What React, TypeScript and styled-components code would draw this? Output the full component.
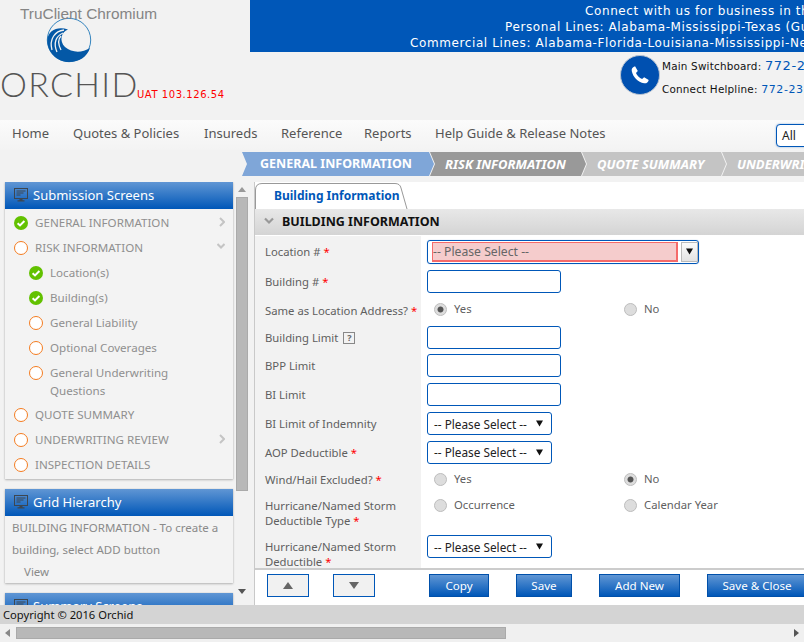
import React from 'react';
import styled, { createGlobalStyle } from 'styled-components';

const GlobalStyle = createGlobalStyle`
  html, body {
    margin: 0;
    padding: 0;
    overflow: hidden;
    background: #f2f2f2;
  }
  * {
    box-sizing: border-box;
  }
`;

const uiFont = `"Noto Sans", "Open Sans", sans-serif`;
const wideFont = `"DejaVu Sans", sans-serif`;

const Page = styled.div`
  width: 804px;
  height: 642px;
  display: flex;
  flex-direction: column;
  overflow: hidden;
  background: #f2f2f2;
  font-family: ${uiFont};
`;

const Header = styled.header`
  height: 120px;
  flex: none;
  display: flex;
`;

const Logo = styled.div`
  width: 250px;
  flex: none;
  position: relative;
  display: flex;
  flex-direction: column;
`;

const Product = styled.div`
  position: absolute;
  left: 20px;
  top: 5px;
  font: 15.4px "Liberation Sans", sans-serif;
  color: #858585;
`;

const Wave = styled.svg`
  width: 46px;
  height: 46px;
  margin: 17px 0 0 46px;
  display: block;
`;

const BrandRow = styled.div`
  display: flex;
  align-items: flex-end;
  margin-top: 3px;
`;

const Brand = styled.div`
  font: 300 34px/36px Lato, sans-serif;
  letter-spacing: 1.3px;
  color: #555;
  width: 137px;
  white-space: nowrap;
`;

const Env = styled.div`
  font: 10px/14px ${wideFont};
  letter-spacing: 0.55px;
  color: #f00;
  white-space: nowrap;
`;

const HeaderRight = styled.div`
  flex: 1;
  min-width: 0;
  display: flex;
  flex-direction: column;
`;

const Banner = styled.div`
  height: 52px;
  background: #0057b8;
  color: #fff;
  overflow: hidden;
  padding-top: 3px;
  font: 12px/16px ${wideFont};
  letter-spacing: 0.6px;
`;

const BannerLine = styled.div<{ $indent: number }>`
  margin-left: ${({ $indent }) => $indent}px;
  white-space: nowrap;
`;

const Contact = styled.div`
  display: flex;
  align-items: flex-start;
  padding: 3px 0 0 370px;
`;

const PhoneBadge = styled.div`
  width: 40px;
  height: 40px;
  flex: none;
  border-radius: 50%;
  background: #0050b0;
  border: 1px solid #b9c4d2;
  display: flex;
  align-items: center;
  justify-content: center;
`;

const ContactLines = styled.div`
  margin: 2px 0 0 2px;
  display: flex;
  flex-direction: column;
  gap: 6px;
  font: 10.4px/17px ${wideFont};
  letter-spacing: 0.2px;
  color: #111;
  white-space: nowrap;
`;

const PhoneNumber = styled.span<{ $big?: boolean }>`
  color: #0057b8;
  font-size: ${({ $big }) => ($big ? '13px' : '11px')};
  letter-spacing: 0.6px;
`;

const Nav = styled.nav`
  height: 30px;
  flex: none;
  display: flex;
  align-items: center;
  padding-left: 12px;
  background: linear-gradient(#fbfbfb, #f3f3f3);
  color: #555;
  font-size: 13px;
`;

const NavItem = styled.div<{ $width: number }>`
  width: ${({ $width }) => $width}px;
  flex: none;
  white-space: nowrap;
  padding-bottom: 5px;
`;

const SearchSelect = styled.div`
  margin-left: auto;
  width: 40px;
  height: 23px;
  flex: none;
  margin-right: -12px;
  background: #fff;
  border: 1px solid #0057b8;
  border-radius: 4px;
  font-size: 12px;
  line-height: 22px;
  padding-left: 5px;
  color: #222;
  box-shadow: 0 0 2px #7fa6d8;
`;

const Steps = styled.div`
  height: 24px;
  flex: none;
  margin-top: 2px;
  padding-left: 242px;
  display: flex;
`;

const Step = styled.div<{ $bg: string; $width: number; $italic?: boolean }>`
  width: ${({ $width }) => $width}px;
  flex: none;
  margin-right: -4px;
  background: ${({ $bg }) => $bg};
  color: #fff;
  font-size: ${({ $italic }) => ($italic ? 13 : 12.5)}px;
  font-weight: 700;
  font-style: ${({ $italic }) => ($italic ? 'italic' : 'normal')};
  line-height: 24px;
  padding-left: ${({ $italic }) => ($italic ? 15 : 18)}px;
  white-space: nowrap;
  overflow: hidden;
  clip-path: polygon(0 0, calc(100% - 5px) 0, 100% 50%, calc(100% - 5px) 100%, 0 100%, 5px 50%);
`;

const Body = styled.div`
  flex: 1;
  min-height: 0;
  display: flex;
  margin-top: 6px;
`;

const Sidebar = styled.aside`
  width: 254px;
  flex: none;
  display: flex;
  overflow: hidden;
  padding-left: 5px;
`;

const Panels = styled.div`
  width: 228px;
  flex: none;
  display: flex;
  flex-direction: column;
  gap: 10px;
`;

const Panel = styled.section`
  flex: none;
  background: #f3f3f3;
  box-shadow: 0 1px 2px #b5b5b5, 0 0 1px #c5c5c5;
`;

const PanelHead = styled.div`
  height: 27px;
  display: flex;
  align-items: center;
  gap: 5px;
  padding: 0 0 2px 9px;
  background: linear-gradient(#6096d4, #0057b8);
  color: #fff;
  font-size: 13px;
`;

const NavRow = styled.div<{ $nested?: boolean; $tall?: boolean }>`
  min-height: ${({ $tall }) => ($tall ? 42 : 25)}px;
  display: flex;
  align-items: flex-start;
  gap: 7px;
  padding: 4px 8px 0 ${({ $nested }) => ($nested ? 24 : 9)}px;
  color: #8f8f8f;
  font-size: 11.6px;
  line-height: 18px;
`;

const RowText = styled.div`
  flex: 1;
`;

const RowIcon = styled.div`
  flex: none;
  margin-top: 2px;
  width: 14px;
  height: 14px;
`;

const Ring = styled.div`
  width: 14px;
  height: 14px;
  border-radius: 50%;
  border: 1.5px solid #f47c20;
  background: #fff;
`;

const Chevron = styled.svg`
  flex: none;
  margin-top: 3px;
`;

const SectionChevron = styled.svg`
  flex: none;
`;

const NavList = styled.div`
  padding: 1px 0 2px;
`;

const HintText = styled.div`
  padding: 1px 8px 0 7px;
  color: #8a8a8a;
  font-size: 11.5px;
  line-height: 22px;
`;

const HintLink = styled.div`
  padding-left: 12px;
`;

const VBar = styled.div`
  width: 12px;
  flex: none;
  margin-left: 3px;
  display: flex;
  flex-direction: column;
  align-items: center;
`;

const VThumb = styled.div`
  width: 12px;
  height: 294px;
  margin-top: 5px;
  background: #b8b8b8;
  border: 1px solid #aaa;
`;

const ArrowUp = styled.div<{ $color: string; $size: number }>`
  width: 0;
  height: 0;
  border-left: ${({ $size }) => $size}px solid transparent;
  border-right: ${({ $size }) => $size}px solid transparent;
  border-bottom: ${({ $size }) => Math.round($size * 1.3)}px solid ${({ $color }) => $color};
`;

const ArrowDown = styled.div<{ $color: string; $size: number }>`
  width: 0;
  height: 0;
  border-left: ${({ $size }) => $size}px solid transparent;
  border-right: ${({ $size }) => $size}px solid transparent;
  border-top: ${({ $size }) => Math.round($size * 1.3)}px solid ${({ $color }) => $color};
`;

const VTop = styled.div`
  margin-top: 5px;
`;

const VBottom = styled.div`
  margin-top: 98px;
`;

const Main = styled.main`
  flex: 1;
  min-width: 0;
  border-left: 1px solid #c9c9c9;
  display: flex;
  flex-direction: column;
  background: #fff;
  overflow: hidden;
`;

const TabStrip = styled.div`
  height: 26px;
  flex: none;
  margin-top: 1px;
  background: #fff;
  position: relative;
`;

const TabShape = styled.svg`
  position: absolute;
  left: 0;
  top: 0;
`;

const TabLabel = styled.div`
  position: absolute;
  left: 19px;
  top: 4px;
  color: #0057b8;
  font-size: 12px;
  font-weight: 700;
  line-height: 18px;
`;

const SectionHead = styled.div`
  height: 26px;
  flex: none;
  display: flex;
  align-items: center;
  gap: 8px;
  padding: 0 0 2px 9px;
  background: linear-gradient(#e8e8e8, #d4d4d4);
  color: #111;
  font-size: 12.5px;
  font-weight: 700;
`;

const Form = styled.div`
  flex: 1;
  min-height: 0;
  margin-top: 1px;
  overflow: hidden;
`;

const Row = styled.div<{ $height: number }>`
  height: ${({ $height }) => $height}px;
  display: flex;
`;

const Label = styled.div<{ $top?: boolean }>`
  width: 166px;
  flex: none;
  background: #f2f2f2;
  padding: ${({ $top }) => ($top ? 5 : 0)}px 0 0 10px;
  color: #5f5f5f;
  font-size: 11.3px;
  line-height: 15px;
  white-space: nowrap;
  display: flex;
  align-items: ${({ $top }) => ($top ? 'flex-start' : 'center')};
`;

const Star = styled.span`
  color: #f00;
  margin-left: 3px;
`;

const Field = styled.div<{ $top?: boolean }>`
  flex: 1;
  min-width: 0;
  padding: ${({ $top }) => ($top ? 1 : 0)}px 0 0 6px;
  display: flex;
  align-items: ${({ $top }) => ($top ? 'flex-start' : 'center')};
`;

const TextInput = styled.div`
  width: 134px;
  height: 23px;
  background: #fff;
  border: 1px solid #0057b8;
  border-radius: 3px;
`;

const Select = styled.div`
  width: 125px;
  height: 23px;
  border: 1px solid #0057b8;
  border-radius: 3px;
  display: flex;
  align-items: center;
  justify-content: space-between;
  padding: 0 7px 0 6px;
  color: #222;
  font-size: 11.8px;
`;

const Combo = styled.div`
  width: 272px;
  height: 24px;
  border: 1px solid #0057b8;
  border-radius: 3px;
  padding: 1px 0 1px 4px;
  display: flex;
  box-shadow: 0 0 1px #7fa6d8;
`;

const ComboInput = styled.div`
  width: 246px;
  flex: none;
  background: #f5cccc;
  border: 1px solid #f56a6a;
  border-width: 1px 2px 2px 1px;
  color: #666;
  font-size: 12.2px;
  line-height: 17px;
  white-space: nowrap;
`;

const ComboButton = styled.div`
  width: 17px;
  margin-left: auto;
  background: linear-gradient(#fbfbfb, #e3e3e3);
  border: 1px solid #bbb;
  display: flex;
  align-items: center;
  justify-content: center;
`;

const RadioCell = styled.div<{ $width: number }>`
  width: ${({ $width }) => $width}px;
  flex: none;
  display: flex;
  gap: 7px;
  padding-left: 7px;
  color: #5f5f5f;
  font-size: 11.3px;
  line-height: 15px;
`;

const RadioTop = styled(Field)`
  align-items: flex-start;
  padding-top: 5px;
`;

const Radio = styled.div<{ $on?: boolean }>`
  width: 13px;
  height: 13px;
  margin-top: 2px;
  flex: none;
  border-radius: 50%;
  background: ${({ $on }) => ($on ? 'radial-gradient(#555 0 2.6px, #ddd 3.4px)' : '#ddd')};
  border: 1px solid #bdbdbd;
`;

const HelpMark = styled.span`
  display: inline-block;
  width: 12px;
  height: 12px;
  margin-left: 5px;
  border: 1px solid #888;
  color: #666;
  font-size: 9px;
  font-weight: 700;
  line-height: 10px;
  text-align: center;
`;

const ActionBar = styled.div`
  height: 37px;
  flex: none;
  border-top: 2px solid #ccc;
  display: flex;
  align-items: flex-start;
  padding: 4px 0 0 12px;
  background: #fff;
`;

const PagerButton = styled.div<{ $gap: number }>`
  width: 42px;
  height: 23px;
  flex: none;
  margin-right: ${({ $gap }) => $gap}px;
  background: #f1f1f1;
  border: 1px solid #0057b8;
  display: flex;
  align-items: center;
  justify-content: center;
`;

const ActionButton = styled.div<{ $width: number; $gap: number }>`
  width: ${({ $width }) => $width}px;
  height: 23px;
  flex: none;
  margin-right: ${({ $gap }) => $gap}px;
  background: linear-gradient(#6096d4, #0057b8);
  border: 1px solid #0050aa;
  color: #fff;
  font-size: 11.6px;
  line-height: 22px;
  text-align: center;
  white-space: nowrap;
`;

const Copyright = styled.footer`
  height: 19px;
  flex: none;
  background: #d4d4d4;
  color: #111;
  font-size: 11.2px;
  line-height: 19px;
  padding-left: 3px;
  position: relative;
`;

const HBar = styled.div`
  height: 18px;
  flex: none;
  background: #f0f0f0;
  display: flex;
  align-items: center;
  padding: 0 5px;
`;

const HThumb = styled.div`
  width: 490px;
  height: 12px;
  margin-left: 6px;
  background: #b8b8b8;
  border: 1px solid #aaa;
`;

const HArrowLeft = styled.div`
  width: 0;
  height: 0;
  border-top: 4px solid transparent;
  border-bottom: 4px solid transparent;
  border-right: 5px solid #888;
`;

const HArrowRight = styled.div`
  width: 0;
  height: 0;
  margin-left: auto;
  border-top: 4px solid transparent;
  border-bottom: 4px solid transparent;
  border-left: 5px solid #555;
`;

const MonitorIcon = () => (
  <svg width="14" height="14" viewBox="0 0 14 14">
    <rect x="0.5" y="0.5" width="13" height="10" fill="none" stroke="#3d4650" />
    <path d="M2.5 3h9M2.5 5h7M2.5 7h4" stroke="#3d4650" />
    <path d="M5.5 11h3v1.200h2v1.300h-7v-1.300h2z" fill="#3d4650" />
  </svg>
);

const CheckIcon = () => (
  <svg width="14" height="14" viewBox="0 0 14 14">
    <circle cx="7" cy="7" r="7" fill="#62c100" />
    <path d="M3.600 7.200l2.400 2.200 4.400-4.400" fill="none" stroke="#fff" strokeWidth="2" />
  </svg>
);

const ChevronRight = () => (
  <Chevron width="6" height="10" viewBox="0 0 6 10">
    <path d="M1 1l4 4-4 4" fill="none" stroke="#c4c4c4" strokeWidth="2" />
  </Chevron>
);

const ChevronDown = () => (
  <Chevron width="8" height="8" viewBox="0 0 8 8">
    <path d="M0.500 2l3.500 3.500L7.500 2" fill="none" stroke="#c4c4c4" strokeWidth="2" />
  </Chevron>
);

const SelectArrow = () => (
  <svg width="9" height="7" viewBox="0 0 9 7">
    <path d="M1 0.500h7L4.500 6.500z" fill="#111" />
  </svg>
);

type NavEntry = {
  label: string;
  done?: boolean;
  nested?: boolean;
  tall?: boolean;
  chevron?: 'right' | 'down';
};

const navEntries: NavEntry[] = [
  { label: 'GENERAL INFORMATION', done: true, chevron: 'right' },
  { label: 'RISK INFORMATION', chevron: 'down' },
  { label: 'Location(s)', done: true, nested: true },
  { label: 'Building(s)', done: true, nested: true },
  { label: 'General Liability', nested: true },
  { label: 'Optional Coverages', nested: true },
  { label: 'General Underwriting Questions', nested: true, tall: true },
  { label: 'QUOTE SUMMARY' },
  { label: 'UNDERWRITING REVIEW', chevron: 'right' },
  { label: 'INSPECTION DETAILS' },
];

const PleaseSelect = () => (
  <Select>
    -- Please Select --
    <SelectArrow />
  </Select>
);

const App: React.FC = () => (
  <Page>
    <GlobalStyle />
    <Header>
      <Logo>
        <Wave viewBox="0 0 46 46">
          <circle cx="23" cy="23" r="21.7" fill="none" stroke="#1f77b8" strokeWidth="0.9" />
          <path
            d="M1.300 23C2 13 12 9 22 12.500C15 15 13 24 19 30C26 36 36 36 44 31C41 40 33 45 23 45C11 45 1 35 1.300 23z"
            fill="#0458a6"
          />
          <path
            d="M6 33C3 22 9 14 18 13M11 35C7 26 10 19 17 16M15 33C12 27 12 22 15 19"
            fill="none"
            stroke="#f2f2f2"
            strokeWidth="1.300"
          />
        </Wave>
        <Product>TruClient Chromium</Product>
        <BrandRow>
          <Brand>ORCHID</Brand>
          <Env>UAT 103.126.54</Env>
        </BrandRow>
      </Logo>
      <HeaderRight>
        <Banner>
          <BannerLine $indent={335}>Connect with us for business in the following states</BannerLine>
          <BannerLine $indent={255}>Personal Lines: Alabama-Mississippi-Texas (Gulf Coast)</BannerLine>
          <BannerLine $indent={160}>Commercial Lines: Alabama-Florida-Louisiana-Mississippi-New Jersey</BannerLine>
        </Banner>
        <Contact>
          <PhoneBadge>
            <svg width="22" height="22" viewBox="0 0 24 24">
              <path
                d="M6.600 2.500l3 5-2 2.200c1 2.600 3.700 5.300 6.700 6.700l2.200-2 5 3c-.6 2.500-2.800 4.100-5 3.600C9.500 19.500 4.500 14.500 3 7.500c-.5-2.200 1.100-4.400 3.600-5z"
                fill="#fff"
              />
            </svg>
          </PhoneBadge>
          <ContactLines>
            <div>
              Main Switchboard: <PhoneNumber $big>772-219-0000</PhoneNumber>
            </div>
            <div>
              Connect Helpline: <PhoneNumber>772-231-0000</PhoneNumber>
            </div>
          </ContactLines>
        </Contact>
      </HeaderRight>
    </Header>

    <Nav>
      <NavItem $width={61}>Home</NavItem>
      <NavItem $width={131}>Quotes &amp; Policies</NavItem>
      <NavItem $width={77}>Insureds</NavItem>
      <NavItem $width={83}>Reference</NavItem>
      <NavItem $width={71}>Reports</NavItem>
      <NavItem $width={200}>Help Guide &amp; Release Notes</NavItem>
      <SearchSelect>All</SearchSelect>
    </Nav>

    <Steps>
      <Step $bg="#7fa6d8" $width={192}>GENERAL INFORMATION</Step>
      <Step $bg="#999999" $width={156} $italic>RISK INFORMATION</Step>
      <Step $bg="#c4c4c4" $width={144} $italic>QUOTE SUMMARY</Step>
      <Step $bg="#c4c4c4" $width={160} $italic>UNDERWRITING REVIEW</Step>
    </Steps>

    <Body>
      <Sidebar>
        <Panels>
          <Panel>
            <PanelHead>
              <MonitorIcon />
              Submission Screens
            </PanelHead>
            <NavList>
              {navEntries.map((entry) => (
                <NavRow key={entry.label} $nested={entry.nested} $tall={entry.tall}>
                  <RowIcon>{entry.done ? <CheckIcon /> : <Ring />}</RowIcon>
                  <RowText>{entry.label}</RowText>
                  {entry.chevron === 'right' && <ChevronRight />}
                  {entry.chevron === 'down' && <ChevronDown />}
                </NavRow>
              ))}
            </NavList>
          </Panel>
          <Panel>
            <PanelHead>
              <MonitorIcon />
              Grid Hierarchy
            </PanelHead>
            <HintText>
              BUILDING INFORMATION - To create a building, select ADD button
              <HintLink>View</HintLink>
            </HintText>
          </Panel>
          <Panel>
            <PanelHead>
              <MonitorIcon />
              Summary Screens
            </PanelHead>
          </Panel>
        </Panels>
        <VBar>
          <VTop>
            <ArrowUp $color="#999" $size={4} />
          </VTop>
          <VThumb />
          <VBottom>
            <ArrowDown $color="#555" $size={4} />
          </VBottom>
        </VBar>
      </Sidebar>

      <Main>
        <TabStrip>
          <TabShape width="160" height="26" viewBox="0 0 160 26">
            <path d="M0.500 26V7Q0.500 0.500 7 0.500H140Q145 0.500 146 5L152 26" fill="#fff" stroke="#999" />
          </TabShape>
          <TabLabel>Building Information</TabLabel>
        </TabStrip>
        <SectionHead>
          <SectionChevron width="10" height="8" viewBox="0 0 10 8">
            <path d="M1 1.500l4 4 4-4" fill="none" stroke="#999" strokeWidth="2.200" />
          </SectionChevron>
          BUILDING INFORMATION
        </SectionHead>
        <Form>
          <Row $height={31}>
            <Label>
              Location #<Star>*</Star>
            </Label>
            <Field>
              <Combo>
                <ComboInput>-- Please Select --</ComboInput>
                <ComboButton>
                  <SelectArrow />
                </ComboButton>
              </Combo>
            </Field>
          </Row>
          <Row $height={29}>
            <Label>
              Building #<Star>*</Star>
            </Label>
            <Field>
              <TextInput />
            </Field>
          </Row>
          <Row $height={28}>
            <Label>
              Same as Location Address?<Star>*</Star>
            </Label>
            <RadioTop>
              <RadioCell $width={190}>
                <Radio $on />
                Yes
              </RadioCell>
              <RadioCell $width={160}>
                <Radio />
                No
              </RadioCell>
            </RadioTop>
          </Row>
          <Row $height={27}>
            <Label>
              Building Limit<HelpMark>?</HelpMark>
            </Label>
            <Field>
              <TextInput />
            </Field>
          </Row>
          <Row $height={29}>
            <Label>BPP Limit</Label>
            <Field>
              <TextInput />
            </Field>
          </Row>
          <Row $height={29}>
            <Label>BI Limit</Label>
            <Field>
              <TextInput />
            </Field>
          </Row>
          <Row $height={29}>
            <Label>BI Limit of Indemnity</Label>
            <Field>
              <PleaseSelect />
            </Field>
          </Row>
          <Row $height={28}>
            <Label>
              AOP Deductible<Star>*</Star>
            </Label>
            <Field>
              <PleaseSelect />
            </Field>
          </Row>
          <Row $height={26}>
            <Label>
              Wind/Hail Excluded?<Star>*</Star>
            </Label>
            <RadioTop>
              <RadioCell $width={190}>
                <Radio />
                Yes
              </RadioCell>
              <RadioCell $width={160}>
                <Radio $on />
                No
              </RadioCell>
            </RadioTop>
          </Row>
          <Row $height={42}>
            <Label>
              <div>
                Hurricane/Named Storm
                <br />
                Deductible Type<Star>*</Star>
              </div>
            </Label>
            <RadioTop>
              <RadioCell $width={190}>
                <Radio />
                Occurrence
              </RadioCell>
              <RadioCell $width={160}>
                <Radio />
                Calendar Year
              </RadioCell>
            </RadioTop>
          </Row>
          <Row $height={34}>
            <Label $top>
              <div>
                Hurricane/Named Storm
                <br />
                Deductible<Star>*</Star>
              </div>
            </Label>
            <Field $top>
              <PleaseSelect />
            </Field>
          </Row>
        </Form>
        <ActionBar>
          <PagerButton $gap={24}>
            <ArrowUp $color="#666" $size={5} />
          </PagerButton>
          <PagerButton $gap={54}>
            <ArrowDown $color="#666" $size={5} />
          </PagerButton>
          <ActionButton $width={60} $gap={27}>Copy</ActionButton>
          <ActionButton $width={56} $gap={27}>Save</ActionButton>
          <ActionButton $width={81} $gap={27}>Add New</ActionButton>
          <ActionButton $width={100} $gap={0}>Save &amp; Close</ActionButton>
        </ActionBar>
      </Main>
    </Body>

    <Copyright>Copyright © 2016 Orchid</Copyright>
    <HBar>
      <HArrowLeft />
      <HThumb />
      <HArrowRight />
    </HBar>
  </Page>
);

export default App;
